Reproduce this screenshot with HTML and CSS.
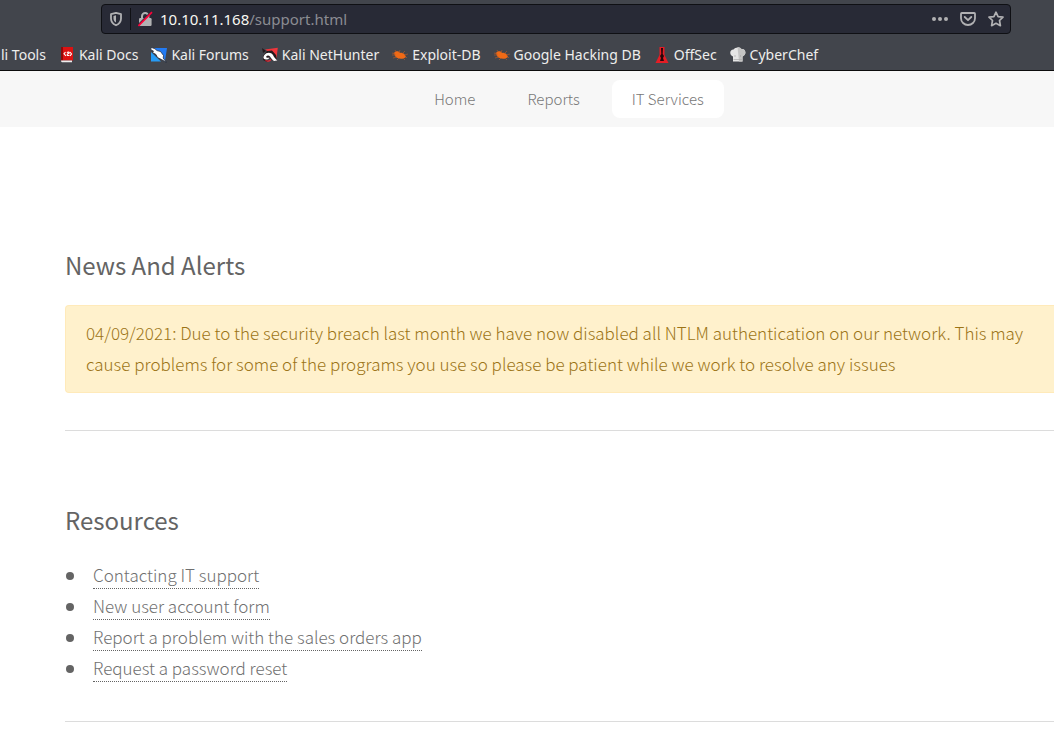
FILE: index.html
```
<!DOCTYPE html>
<html lang="en">
<head>
<meta charset="utf-8">
<title>Support</title>
<link rel="stylesheet" href="styles.css">
</head>
<body>
<header class="browser">
  <div class="urlbar">
    <button class="icon-btn" aria-label="Tracking protection"><svg width="14" height="16" viewBox="0 0 14 16"><path d="M7 1.8L12 3.2V7.4C12 10.6 10.2 12.8 7 14.3C3.8 12.8 2 10.6 2 7.4V3.2Z" fill="none" stroke="#b1b1b3" stroke-width="1.8" stroke-linejoin="round"/><path d="M7 4.3V11.6C5.2 10.5 4.5 9 4.5 7.2V5Z" fill="#b1b1b3"/></svg></button>
    <span class="divider"></span>
    <button class="icon-btn" aria-label="Connection is not secure"><svg width="16" height="16" viewBox="0 0 16 16"><path d="M5 8V5.2A3.2 3.2 0 0 1 11.4 5.2V8" fill="none" stroke="#b1b1b3" stroke-width="2"/><rect x="2" y="7" width="12.6" height="8" rx="1.2" fill="#b1b1b3"/><path d="M.8 14.2L14.2 .8" stroke="#282a36" stroke-width="1.4"/><path d="M1.4 14.8L15 1.2" stroke="#ff0039" stroke-width="1.7"/></svg></button>
    <p class="address"><span class="host">10.10.11.168</span>/support.html</p>
    <div class="actions">
      <button class="icon-btn" aria-label="Page actions"><svg width="16" height="16" viewBox="0 0 16 16" fill="#b1b1b3"><circle cx="2" cy="8" r="2"/><circle cx="8" cy="8" r="2"/><circle cx="14" cy="8" r="2"/></svg></button>
      <button class="icon-btn" aria-label="Save to Pocket"><svg width="16" height="16" viewBox="0 0 16 16" fill="none" stroke="#b1b1b3" stroke-width="1.8" stroke-linecap="round" stroke-linejoin="round"><path d="M1.8 2H14.2Q15 2 15 2.8V7.2A7 6.8 0 0 1 1 7.2V2.8Q1 2 1.8 2Z"/><path d="M4.7 6L8 9.2L11.3 6"/></svg></button>
      <button class="icon-btn" aria-label="Bookmark this page"><svg width="16" height="16" viewBox="0 0 16 16" fill="none" stroke="#b1b1b3" stroke-width="1.7" stroke-linejoin="round"><path d="M8 1.2L10.1 5.6L15 6.2L11.5 9.5L12.4 14.7L8 12.3L3.6 14.7L4.5 9.5L1 6.2L5.9 5.6Z"/></svg></button>
    </div>
  </div>
  <nav class="bookmarks" aria-label="Bookmarks">
    <a href="#">li Tools</a>
    <a href="#"><svg width="16" height="16" viewBox="0 0 16 16"><path d="M2 0H14V13.5H2Z" fill="#dc1212"/><path d="M2 0H4V13.5H2Z" fill="#8f0909"/><path d="M2 13.5H13V15.3H3Q2 15 2 13.5Z" fill="#eee"/><path d="M6.5 5L5 6.8L7 8.8M11 5L12.5 7L11 8.8M7.8 5.4C11 4.4 10.5 6.4 9 6.8C7.8 7.2 7.8 9 10.3 8.4" fill="none" stroke="#fff" stroke-width="1.1"/></svg>Kali Docs</a>
    <a href="#"><svg width="16" height="16" viewBox="0 0 16 16"><path d="M3 1H16L14 14L4 4Z" fill="#237bf3"/><path d="M0 5L10 14.5H0Z" fill="#279bf5"/><path d="M0 .3L4 1.8L6 3.6L9.5 4.5L12.5 8.5L12.2 11L15.3 15.3L10.5 12.5L6.5 10.5L5 7.5L1.5 5.5L2.5 4L0 3Z" fill="#fff" stroke="#182238" stroke-width=".7"/></svg>Kali Forums</a>
    <a href="#"><svg width="16" height="16" viewBox="0 0 16 16"><path d="M3 2.5L15.8 .8L14.5 11L9 6Z" fill="#f0353b"/><path d="M0 1L4 4L1 6ZM1 9L5 4L10 3.5L14 8L15 14L10 13L7 10L5 15L1 13Z" fill="#25191c"/><path d="M4 12.5C1 12.5 1 10 2.2 8.3C4.5 5 9 5 11 8C12 10 13 11.5 15.3 13.6L12 14C10 12.5 9 11 8 9.5C6.5 7.5 4 8.5 4.2 10C4.5 11 6 11 7.2 10.5C7 12 5.5 12.7 4 12.5Z" fill="#fff"/><path d="M3.5 13.5C6 14.5 8 14 9 12.5" fill="none" stroke="#ef2734" stroke-width="1.3"/></svg>Kali NetHunter</a>
    <a href="#"><svg width="16" height="16" viewBox="0 0 16 16"><path d="M2 6C4 3.5 7 4 8 6C11 5.3 13 7 14 10C11 13 5 12 3 9Z" fill="#f06a16"/><path d="M0 6L3 7L2 5M4 5L3 3M7 6L8 3M10 7L13 4M12 8L16 7M13 9L15 11M11 11L13 13M7 11L5 13M5 10L1 11M4 8L0 8" fill="none" stroke="#c15b23" stroke-width=".6"/></svg>Exploit-DB</a>
    <a href="#"><svg width="16" height="16" viewBox="0 0 16 16"><path d="M2 6C4 3.5 7 4 8 6C11 5.3 13 7 14 10C11 13 5 12 3 9Z" fill="#f06a16"/><path d="M0 6L3 7L2 5M4 5L3 3M7 6L8 3M10 7L13 4M12 8L16 7M13 9L15 11M11 11L13 13M7 11L5 13M5 10L1 11M4 8L0 8" fill="none" stroke="#c15b23" stroke-width=".6"/></svg>Google Hacking DB</a>
    <a href="#"><svg width="16" height="16" viewBox="0 0 16 16"><path d="M5.5 0H10.5V8L14.5 16H1.5L5.5 8Z" fill="#e51d25"/><path d="M7 1H9L8.7 7L10 9L9 11L10 14H6L7 11L6 9L7.3 7Z" fill="#25070b"/></svg>OffSec</a>
    <a href="#"><svg width="16" height="16" viewBox="0 0 16 16"><path d="M3 14.5V9.5C-1 8-.5 2.5 3.5 2.5C5-.2 10-.2 11.5 2C16 1.5 17 8 12.5 9.5V14.5Z" fill="#e5e5e5"/><path d="M7.5 0Q10.5 0 11.5 2C16 1.5 17 8 12.5 9.5V14.5H9Z" fill="#c4c4c4"/><path d="M3.5 12.5H12M5 8V10M10.5 8V10" stroke="#aaa" stroke-width=".7"/></svg>CyberChef</a>
  </nav>
</header>
<nav class="site-nav" aria-label="Site">
  <a href="#">Home</a>
  <a href="#">Reports</a>
  <a href="#" class="current" aria-current="page">IT Services</a>
</nav>
<main class="content">
  <section class="news">
    <h2>News And Alerts</h2>
    <p class="alert">04/09/2021: Due to the security breach last month we have now disabled all NTLM authentication on our network. This may cause problems for some of the programs you use so please be patient while we work to resolve any issues</p>
  </section>
  <section class="resources">
    <h2>Resources</h2>
    <ul>
      <li><a href="#">Contacting IT support</a></li>
      <li><a href="#">New user account form</a></li>
      <li><a href="#">Report a problem with the sales orders app</a></li>
      <li><a href="#">Request a password reset</a></li>
    </ul>
  </section>
</main>
</body>
</html>
```
FILE: styles.css
```
* { box-sizing: border-box; }
body {
  margin: 0;
  background: #fff;
  color: #646464;
  font-family: "Noto Sans CJK SC", "Noto Sans", sans-serif;
  font-size: 17px;
  font-weight: 300;
  line-height: 31px;
  overflow-x: hidden;
}
h2, p, ul { margin: 0; }
a { color: inherit; text-decoration: none; }
svg { display: block; flex: none; }

.browser {
  background: #42454c;
  border-bottom: 1px solid #0c0c0d;
  font-family: "Noto Sans", sans-serif;
  font-size: 15px;
  font-weight: 400;
  padding-top: 4px;
}
.urlbar {
  display: flex;
  align-items: center;
  height: 30px;
  margin: 0 43px 0 101px;
  padding: 0 6px 0 7px;
  background: #282a36;
  border: 1px solid #0f1014;
  border-radius: 4px;
  color: #8b8c92;
}
.icon-btn { border: 0; padding: 0; background: none; }
.divider { width: 1px; height: 22px; margin: 0 6px 0 7px; background: #0f1014; }
.address { flex: 1; margin-left: 7px; line-height: 28px; }
.host { color: #f8f8f2; }
.actions { display: flex; gap: 12px; }
.bookmarks {
  display: flex;
  gap: 13px;
  height: 36px;
  padding: 5px 0 0 1px;
  color: #eeeeec;
  font-size: 14px;
  line-height: 31px;
  white-space: nowrap;
}
.bookmarks a { display: flex; align-items: center; gap: 4px; }

.site-nav {
  display: flex;
  justify-content: center;
  gap: 12px;
  padding: 9px 0 9px 84px;
  background: #f7f7f7;
  color: #777;
  font-size: 15px;
  line-height: 38px;
}
.site-nav a { padding: 0 20px; border-radius: 8px; }
.site-nav .current { background: #fff; }

.content { padding: 120px 0 0 65px; }
h2 {
  font-size: 24px;
  font-weight: 400;
  line-height: 36px;
}
.news { padding-bottom: 37px; }
.alert {
  margin-top: 22px;
  padding: 11px 20px 13px;
  background: #fff1cc;
  border: 1px solid #ffeaba;
  border-right: 0;
  border-radius: 4px 0 0 4px;
  color: #9c7416;
}
section { border-bottom: 1px solid #dcdcdc; }
.resources { padding: 71px 0 37px; }
ul { margin-top: 22px; padding: 0; list-style: none; }
li { display: flex; align-items: center; height: 31px; }
li::before {
  content: "";
  width: 8px;
  height: 8px;
  margin: 0 19px 0 1px;
  border-radius: 50%;
  background: #646464;
}
li a { line-height: 26px; color: #707070; border-bottom: 1px dotted #646464; }
```
